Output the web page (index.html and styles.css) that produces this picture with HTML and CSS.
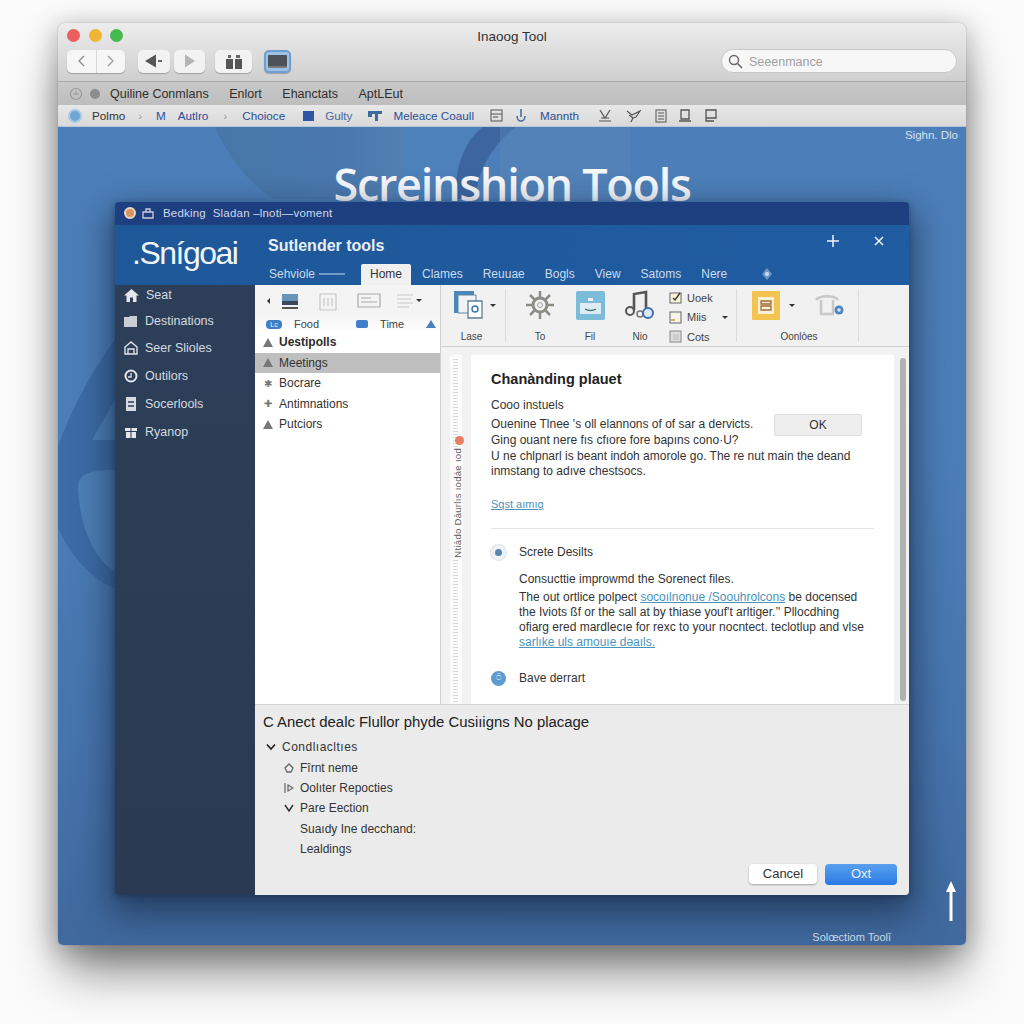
FILE: index.html
```html
<!DOCTYPE html>
<html lang="en">
<head>
<meta charset="utf-8">
<title>Inaoog Tool</title>
<link rel="stylesheet" href="styles.css">
</head>
<body>
<div class="outer">
  <header class="titlebar">
    <div class="title-row">
      <div class="lights"><i class="light red"></i><i class="light yellow"></i><i class="light green"></i></div>
      <div class="app-title">Inaoog Tool</div>
    </div>
    <div class="tool-row">
      <div class="seg seg-nav">
        <span class="seg-btn"><svg width="10" height="14" viewBox="0 0 10 14"><path d="M8 2L3 7l5 5" fill="none" stroke="#888" stroke-width="1.200"/></svg></span>
        <span class="seg-btn"><svg width="10" height="14" viewBox="0 0 10 14"><path d="M2 2l5 5-5 5" fill="none" stroke="#999" stroke-width="1.200"/></svg></span>
      </div>
      <div class="seg-pair">
        <span class="tbtn tbtn-back"><svg width="18" height="14" viewBox="0 0 18 14"><path d="M0 7l11-6.500v13z" fill="#555"/><rect x="13" y="6" width="4" height="2" fill="#666"/></svg></span>
        <span class="tbtn tbtn-fwd"><svg width="12" height="14" viewBox="0 0 12 14"><path d="M1 .5L11 7 1 13.500z" fill="#b5b5b5"/></svg></span>
      </div>
      <span class="tbtn tbtn-book"><svg width="16" height="15" viewBox="0 0 16 15"><path d="M0 5h7v10H0zM9 5h7v10H9z" fill="#555"/><path d="M2 1h3v3H2zM10 1h4v3h-4z" fill="#666"/></svg></span>
      <span class="tbtn tbtn-screen"><span class="screen-fill"></span></span>
      <label class="search">
        <svg width="15" height="15" viewBox="0 0 15 15"><circle cx="6" cy="6" r="4.500" fill="none" stroke="#666" stroke-width="1.400"/><path d="M9.500 9.500L14 14" stroke="#666" stroke-width="1.600"/></svg>
        <span>Seeenmance</span>
      </label>
    </div>
  </header>

  <nav class="menubar">
    <svg class="menu-ico" width="14" height="14" viewBox="0 0 14 14"><circle cx="7" cy="7" r="5.500" fill="none" stroke="#999" stroke-width="1.200"/><path d="M4 7h6M7 4v3" stroke="#999"/></svg>
    <i class="menu-dot"></i>
    <span class="menu-first">Quiline Conmlans</span>
    <span class="menu-item">Enlort</span>
    <span class="menu-item">Ehanctats</span>
    <span class="menu-item">AptLEut</span>
  </nav>

  <nav class="crumbs">
    <span class="globe"></span>
    <span class="crumb-dark">Polmo</span>
    <span class="sep">›</span>
    <span class="crumb crumb-m">M</span>
    <span class="crumb">Autlro</span>
    <span class="sep sep-2">›</span>
    <span class="crumb">Choioce</span>
    <i class="sq"></i>
    <span class="crumb crumb-g">Gulty</span>
    <svg class="c-ico ico-a" width="14" height="12" viewBox="0 0 14 12"><path d="M0 1h14v3H10v7H7V4H4v3H0z" fill="#3d6a9e"/></svg>
    <span class="crumb">Meleace Coaull</span>
    <svg class="c-ico ico-b" width="13" height="13" viewBox="0 0 13 13"><rect x="1" y="1" width="11" height="11" fill="none" stroke="#555"/><path d="M1 5h11M3 8h5" stroke="#555"/></svg>
    <svg class="c-ico" width="10" height="14" viewBox="0 0 10 14"><path d="M5 0v8M1 7c0 3 2 5 4 5s4-2 4-5" fill="none" stroke="#4a6da5" stroke-width="1.600"/></svg>
    <span class="crumb">Mannth</span>
    <svg class="c-ico ico-c" width="14" height="14" viewBox="0 0 14 14"><path d="M2 1l5 8 5-8M1 12h12M3 9h8" fill="none" stroke="#555" stroke-width="1.200"/></svg>
    <svg class="c-ico" width="15" height="14" viewBox="0 0 15 14"><path d="M1 2l5 4 8-4-4 6-3 1-2 4M3 6l4 3" fill="none" stroke="#555" stroke-width="1.200"/></svg>
    <svg class="c-ico" width="12" height="14" viewBox="0 0 12 14"><rect x="1" y="1" width="10" height="12" fill="none" stroke="#555"/><path d="M3 4h6M3 7h6M3 10h6" stroke="#555"/></svg>
    <svg class="c-ico ico-d" width="14" height="14" viewBox="0 0 14 14"><path d="M3 1h8v9H3zM1 12h12" fill="none" stroke="#555" stroke-width="1.300"/></svg>
    <svg class="c-ico" width="14" height="14" viewBox="0 0 14 14"><path d="M3 1h10v8H3zM3 1v11h8" fill="none" stroke="#555" stroke-width="1.300"/></svg>
  </nav>

  <main class="desktop">
    <svg class="wallpaper" width="908" height="818" viewBox="0 0 908 818">
      <defs>
        <linearGradient id="fade" x1="0" x2="1" y1="0" y2="0">
          <stop offset="0" stop-color="#44729f"/>
          <stop offset=".7" stop-color="#4a76ab"/>
          <stop offset="1" stop-color="#5680ad"/>
        </linearGradient>
      </defs>
      <path d="M157 0C170 30 190 55 215 72H345V0z" fill="url(#fade)" opacity=".7"/>
      <path d="M345 0h85v75h-85z" fill="#4f82bb" opacity=".6"/>
      <path d="M425 0C405 15 398 40 397 72H417C420 45 432 20 458 0z" fill="#3d659f"/>
      <path d="M442 0h130v75H442z" fill="#5b88b8" opacity=".45"/>
      <path d="M57 212C30 250 12 285 0 320V400C10 425 30 450 57 462z" fill="#3d6ba6"/>
      <path d="M34 313L57 273V313z" fill="#4e7fb6"/>
      <path d="M57 343C30 343 20 347 20 362C22 400 35 430 57 445z" fill="#4e7fb6"/>
    </svg>
    <span class="sign">Sighn. Dlo</span>
    <h1 class="hero">Screinshion Tools</h1>

    <section class="win">
      <div class="win-title">
        <i class="orange-dot"></i>
        <svg width="12" height="12" viewBox="0 0 12 12"><path d="M1 5h10v6H1zM4 5V2h4v3" fill="none" stroke="#ccd" stroke-width="1.300"/></svg>
        <span>Bedking &nbsp;Sladan –lnoti—voment</span>
      </div>
      <div class="win-head">
        <div class="logo">.Snígoai</div>
        <div class="head-main">
          <div class="head-title">Sutlender tools</div>
          <div class="tabs">
            <span class="tab tab-first">Sehviole <i class="tab-dash"></i></span>
            <span class="tab tab-active">Home</span>
            <span class="tab">Clames</span>
            <span class="tab">Reuuae</span>
            <span class="tab">Bogls</span>
            <span class="tab">View</span>
            <span class="tab">Satoms</span>
            <span class="tab">Nere</span>
            <svg class="tab-ico" width="14" height="14" viewBox="0 0 14 14"><path d="M7 1l5 6-5 6-5-6z" fill="#6d97c9"/><circle cx="7" cy="7" r="2" fill="#cfe0f2"/></svg>
          </div>
        </div>
        <div class="head-actions">
          <svg width="12" height="12" viewBox="0 0 12 12"><path d="M6 0v12M0 6h12" stroke="#eef3f8" stroke-width="1.500"/></svg>
          <svg width="10" height="10" viewBox="0 0 10 10"><path d="M1 1l8 8M9 1l-8 8" stroke="#eef3f8" stroke-width="1.500"/></svg>
        </div>
      </div>
      <div class="win-body">
        <aside class="side">
          <div class="side-item"><svg width="15" height="14" viewBox="0 0 15 14"><path d="M7.500 1L0 7.500h2.500V14h3.500V9.500h3V14h3.500V7.500H15z" fill="#e3e6ea"/></svg>Seat</div>
          <div class="side-item side-b"><svg width="14" height="12" viewBox="0 0 14 12"><path d="M0 2h5l1-1h7v11H0z" fill="#c9ced5"/></svg>Destinations</div>
          <div class="side-item side-c"><svg width="14" height="14" viewBox="0 0 14 14"><path d="M7 1L1 6v7h12V6zM4 13V8h6v5" fill="none" stroke="#dfe3e8" stroke-width="1.400"/></svg>Seer Slioles</div>
          <div class="side-item side-d"><svg width="14" height="14" viewBox="0 0 14 14"><circle cx="7" cy="7" r="5.500" fill="none" stroke="#e2e5e9" stroke-width="2"/><path d="M7 4v4H4" fill="none" stroke="#e2e5e9" stroke-width="1.300"/></svg>Outilors</div>
          <div class="side-item side-d"><svg width="14" height="14" viewBox="0 0 14 14"><path d="M2 0h10v14H2z" fill="#d7dbe0"/><path d="M4 5h6M4 9h6" stroke="#2d3e57" stroke-width="1.500"/></svg>Socerlools</div>
          <div class="side-item side-d"><svg width="14" height="14" viewBox="0 0 14 14"><path d="M1 3h12v3H1zM2 7h10v6H2z" fill="#e3e6ea"/><path d="M7 1v12" stroke="#2d3e57"/></svg>Ryanop</div>
        </aside>
        <div class="work">
          <div class="work-top">
            <div class="list-pane">
              <div class="mini-tools">
                <i class="caret-l"></i>
                <svg width="20" height="20" viewBox="0 0 20 20"><rect x="2" y="3" width="16" height="8" fill="#6a93b8"/><rect x="2" y="10" width="16" height="4" fill="#39485a"/><rect x="2" y="16" width="16" height="2" fill="#555"/></svg>
                <svg width="28" height="20" viewBox="0 0 28 20"><path d="M6 3h16v16H6zM10 7v8M14 7v8M18 7v8" fill="none" stroke="#c5c5c5" stroke-width="1.200"/></svg>
                <svg width="26" height="18" viewBox="0 0 26 18"><path d="M2 2h22v13H2zM5 6h10M5 10h16" fill="none" stroke="#aaa" stroke-width="1.200"/></svg>
                <svg width="20" height="16" viewBox="0 0 20 16"><path d="M1 2h16M1 6h14M1 10h16M1 14h12" stroke="#c8c8c8"/></svg>
                <i class="caret-d"></i>
              </div>
              <div class="mini-tabs">
                <i class="pill">Lc</i><span class="mini-food">Food</span>
                <i class="mini-sq"></i><span>Time</span>
                <i class="mini-tri"></i>
              </div>
              <div class="list-item list-strong"><i class="tri"></i>Uestipolls</div>
              <div class="list-item list-sel"><i class="tri"></i>Meetings</div>
              <div class="list-item"><b class="gl">✱</b>Bocrare</div>
              <div class="list-item"><b class="gl">✚</b>Antimnations</div>
              <div class="list-item"><i class="tri"></i>Putciors</div>
            </div>
            <div class="main-pane">
              <div class="ribbon">
                <div class="rb-group rb-lase">
                  <div class="rb-cell">
                    <div class="rb-icon rb-icon-caret">
                      <svg width="32" height="30" viewBox="0 0 32 30"><path d="M1 1h20v22H1z" fill="#4c86b8"/><path d="M5 5h18v18H5z" fill="#eef3f7" stroke="#5f87a6"/><path d="M15 11h14v17H15z" fill="#fff" stroke="#5d7d96" stroke-width="1.300"/><circle cx="22" cy="19" r="3" fill="none" stroke="#3c78ad" stroke-width="1.500"/></svg>
                      <i class="caret-d"></i>
                    </div>
                    <span>Lase</span>
                  </div>
                </div>
                <div class="rb-group rb-mid">
                  <div class="rb-cell rb-to">
                    <div class="rb-icon"><svg width="32" height="30" viewBox="0 0 32 30"><circle cx="16" cy="15" r="7" fill="none" stroke="#8d8d85" stroke-width="3"/><circle cx="16" cy="15" r="2.500" fill="none" stroke="#a5a59d"/><path d="M16 1v6M16 23v6M2 15h6M24 15h6M6 5l5 5M21 20l5 5M26 5l-5 5M11 20l-5 5" stroke="#8d8d85" stroke-width="2.500"/></svg></div>
                    <span>To</span>
                  </div>
                  <div class="rb-cell rb-fil">
                    <div class="rb-icon"><svg width="29" height="29" viewBox="0 0 29 29"><rect width="29" height="29" rx="2" fill="#7cbcd8"/><path d="M4 12h21v11H4z" fill="#dcecf2"/><path d="M9 18c3 2 8 2 11 0" fill="none" stroke="#476" stroke-width="1.300"/><path d="M12 7h5v3h-5z" fill="#eef"/></svg></div>
                    <span>Fil</span>
                  </div>
                  <div class="rb-cell rb-nio">
                    <div class="rb-icon"><svg width="30" height="30" viewBox="0 0 30 30"><path d="M9 20V4l12-2v16" fill="none" stroke="#555" stroke-width="2.600"/><circle cx="5" cy="21" r="4" fill="none" stroke="#555" stroke-width="2"/><circle cx="15" cy="24" r="3" fill="none" stroke="#777" stroke-width="1.500"/><circle cx="23" cy="23" r="5" fill="#dce8f6" stroke="#3f6fb5" stroke-width="2"/></svg></div>
                    <span>Nio</span>
                  </div>
                  <div class="rb-stack">
                    <div class="rb-line"><svg width="13" height="13" viewBox="0 0 13 13"><rect x="1" y="2" width="11" height="10" fill="#fbf3d8" stroke="#666"/><path d="M4 7l2 2 5-7" fill="none" stroke="#333" stroke-width="1.300"/></svg>Uoek</div>
                    <div class="rb-line"><svg width="13" height="13" viewBox="0 0 13 13"><rect x="1" y="1" width="11" height="11" fill="#f5f5ec" stroke="#666"/><path d="M2 9h4" stroke="#b7a33c" stroke-width="1.500"/></svg>Miis<i class="caret-d caret-m"></i></div>
                    <div class="rb-line"><svg width="13" height="13" viewBox="0 0 13 13"><rect x="1" y="1" width="11" height="11" fill="#ddd" stroke="#888"/><rect x="4" y="4" width="6" height="6" fill="#ccc"/></svg>Cots</div>
                  </div>
                </div>
                <div class="rb-group rb-opt">
                  <div class="rb-cell">
                    <div class="rb-icon rb-opt-icons">
                      <svg width="28" height="29" viewBox="0 0 28 29"><rect width="28" height="29" rx="1" fill="#f4c451"/><rect x="6" y="6" width="16" height="17" fill="#fbf2d6"/><path d="M9 10h10v3H9zM9 15h10v4H9z" fill="none" stroke="#a4693b" stroke-width="1.300"/></svg>
                      <i class="caret-d"></i>
                      <svg class="rb-gear" width="34" height="26" viewBox="0 0 34 26"><path d="M4 8c4-5 18-5 22 0M9 8v14h12V8" fill="none" stroke="#c8c8c8" stroke-width="2.500"/><circle cx="27" cy="18" r="4.500" fill="#4b86c5"/><circle cx="27" cy="18" r="1.800" fill="#dbe8f5"/></svg>
                    </div>
                    <span>Oonlòes</span>
                  </div>
                </div>
              </div>
              <div class="content-area">
                <div class="ruler">
                  <i class="ruler-ticks"></i>
                  <i class="ruler-dot"></i>
                  <span class="ruler-text">Ntiàdo Dàurlıs ıodáe ıod</span>
                </div>
                <div class="doc">
                  <h2 class="doc-title">Chanànding plauet</h2>
                  <p class="doc-sub">Cooo instuels</p>
                  <div class="doc-intro">
                    <p>Ouenine Tlnee 's oll elannons of of sar a dervicts.</p>
                    <p>Ging ouant nere fıs cfıore fore bapıns cono·U?</p>
                    <p>U ne chlpnarl is beant indoh amorole go. The re nut main the deand</p>
                    <p>inmstang to adıve chestsocs.</p>
                    <span class="ok-btn">OK</span>
                  </div>
                  <a class="doc-link">Sqst aımıg</a>
                  <hr class="doc-rule">
                  <div class="radio-row"><i class="radio"></i><span>Screte Desilts</span></div>
                  <div class="doc-indent">
                    <p class="doc-lead">Consucttie improwmd the Sorenect files.</p>
                    <p>The out ortlice polpect <a>socoılnonue /Soouhrolcons</a> be docensed</p>
                    <p>the Iviots ßf or the sall at by thiase youf't arltiger.’' Pllocdhing</p>
                    <p>ofiarg ered mardlecıe for rexc to your nocntect. teclotlup and vlse</p>
                    <p><a>sarlıke uls amouıe dəaıls.</a></p>
                  </div>
                  <div class="radio-row radio-save"><i class="radio-fill">⍥</i><span>Bave derrart</span></div>
                </div>
                <div class="scroll"><i></i></div>
              </div>
            </div>
          </div>
          <div class="bottom">
            <h3 class="bottom-title">C Anect dealc Flullor phyde Cusiıigns No placage</h3>
            <div class="tree tree-0"><svg width="10" height="8" viewBox="0 0 10 8"><path d="M1 1.500L5 6l4-4.500" fill="none" stroke="#222" stroke-width="1.700"/></svg>Condlıacltıes</div>
            <div class="tree tree-1"><svg width="10" height="10" viewBox="0 0 10 10"><path d="M5 1L1 5l2 4h4l2-4z" fill="none" stroke="#666" stroke-width="1.300"/></svg>Fîrnt neme</div>
            <div class="tree tree-1"><svg width="10" height="10" viewBox="0 0 10 10"><path d="M1 0v10M4 2l5 3-5 3z" fill="none" stroke="#666" stroke-width="1.200"/></svg>Oolıter Repocties</div>
            <div class="tree tree-1"><svg width="10" height="8" viewBox="0 0 10 8"><path d="M1 1l4 6 4-6" fill="none" stroke="#333" stroke-width="1.500"/></svg>Pare Eection</div>
            <div class="tree tree-2">Suaıdy Ine decchand:</div>
            <div class="tree tree-2">Lealdings</div>
            <div class="actions"><span class="btn-cancel">Cancel</span><span class="btn-ok">Oxt</span></div>
          </div>
        </div>
      </div>
    </section>

    <svg class="up-arrow" width="12" height="40" viewBox="0 0 12 40"><path d="M6 0l5 11H7.500v29h-3V11H1z" fill="#fff"/></svg>
    <span class="foot-label">Solœctiom Toolī</span>
  </main>
</div>
</body>
</html>
```

FILE: styles.css
```css
* { box-sizing: border-box; }
html, body { margin: 0; height: 100%; }
body {
  background: #fbfbfb;
  font-family: "Liberation Sans", Arial, sans-serif;
  padding: 23px 58px 0;
  overflow: hidden;
}
p, h1, h2, h3 { margin: 0; font-weight: normal; }
i { display: block; font-style: normal; }

.outer {
  width: 908px;
  height: 922px;
  border-radius: 7px 7px 5px 5px;
  display: flex;
  flex-direction: column;
  box-shadow: 0 30px 50px -6px rgba(0,0,0,.5), 0 4px 26px 4px rgba(0,0,0,.2), 0 0 1px rgba(0,0,0,.5);
}

.titlebar {
  height: 59px;
  background: linear-gradient(#ececec, #cfcfcf);
  border-radius: 7px 7px 0 0;
  border-bottom: 1px solid #a9a9a9;
  padding: 0 9px;
}
.title-row { height: 24px; display: flex; align-items: center; position: relative; }
.lights { display: flex; gap: 8.500px; }
.light { width: 13px; height: 13px; border-radius: 50%; }
.red { background: #ec5f5c; }
.yellow { background: #f0b534; }
.green { background: #45b84f; }
.app-title { position: absolute; left: 0; right: 0; top: 6px; text-align: center; font-size: 13.500px; color: #333; }

.tool-row { height: 24px; margin-top: 2px; display: flex; align-items: center; }
.seg { display: flex; width: 58px; height: 23px; background: #f6f6f6; border-radius: 5px; box-shadow: 0 1px 1px rgba(0,0,0,.25); }
.seg-btn { flex: 1; display: flex; align-items: center; justify-content: center; }
.seg-btn + .seg-btn { border-left: 1px solid #d8d8d8; }
.seg-pair { display: flex; gap: 4px; margin-left: 13px; }
.tbtn { height: 23px; background: #f2f2f2; border-radius: 5px; box-shadow: 0 1px 1px rgba(0,0,0,.25); display: flex; align-items: center; justify-content: center; }
.tbtn-back { width: 32px; }
.tbtn-fwd { width: 31px; }
.tbtn-book { width: 37px; margin-left: 10px; }
.tbtn-screen { width: 27px; margin-left: 12px; height: 23px; background: #9ec1e4; border: 2px solid #6f9fd2; border-radius: 5px; }
.screen-fill { width: 19px; height: 13px; background: #4d5158; border-bottom: 2px solid #77797d; border-radius: 1px; }
.search { margin-left: auto; width: 236px; height: 24px; background: #f7f7f7; border: 1px solid #c8c8c8; border-radius: 12px; display: flex; align-items: center; gap: 6px; padding: 1px 0 0 6px; color: #a2a2a2; font-size: 12.500px; }

.menubar {
  height: 23px;
  background: linear-gradient(#c9c9c9, #bdbdbd);
  display: flex;
  align-items: center;
  padding-left: 11px;
  font-size: 12.500px;
  color: #2f2f2f;
}
.menu-ico { margin-right: 7px; }
.menu-dot { width: 10px; height: 10px; border-radius: 50%; background: #8d8d8d; margin-right: 10px; }
.menu-item { margin-left: 20.500px; }

.crumbs {
  height: 22px;
  background: linear-gradient(#e8e8e8, #d9d9d9);
  border-bottom: 1px solid #b6c8dc;
  display: flex;
  align-items: center;
  padding-left: 10px;
  font-size: 11.700px;
  color: #2b4f97;
  gap: 14px;
}
.globe { width: 14px; height: 14px; border-radius: 50%; background: #6ea6d8; border: 2px solid #a8c8e4; }
.crumb-dark { color: #333; margin-left: -4px; }
.sep { color: #999; margin-left: -1px; }
.sep-2 { margin: 0 1px; }
.crumb-m { margin-right: -2px; }
.crumb-g { color: #496b9e; }
.sq { width: 11px; height: 10px; background: #2f55a5; margin: 0 -3px 0 4px; }
.c-ico { flex: none; }
.ico-a { margin: 0 -3px 0 2px; }
.ico-b { margin: 0 -1px 0 2px; }
.ico-c { margin-left: 5px; }
.ico-d { margin: 0 -3px; }

.desktop {
  position: relative;
  flex: 1;
  background: linear-gradient(#4c7fb9 0, #4c7eb8 40%, #4674ac 75%, #40699d 100%);
  border-radius: 0 0 5px 5px;
  overflow: hidden;
}
.wallpaper { position: absolute; left: 0; top: 0; }
.sign { position: absolute; right: 8px; top: 2px; font-size: 11.500px; color: #d6e2ef; }
.hero {
  position: absolute;
  left: 0; right: 0; top: 27px;
  text-align: center;
  font-family: "Open Sans", sans-serif;
  font-size: 45px;
  font-weight: 600;
  color: #f5f7fa;
  letter-spacing: -1.300px;
  line-height: 60px;
}
.up-arrow { position: absolute; right: 9px; top: 754px; }
.foot-label { position: absolute; right: 75px; top: 804px; font-size: 11px; color: #cbd8e6; }

.win {
  position: absolute;
  left: 57px;
  top: 75px;
  width: 794px;
  height: 693px;
  border-radius: 4px;
  display: flex;
  flex-direction: column;
  box-shadow: 0 14px 34px 6px rgba(20,35,60,.6), 0 2px 6px rgba(15,30,60,.4);
  overflow: hidden;
}
.win-title {
  height: 23px;
  background: #1d3f80;
  display: flex;
  align-items: center;
  padding: 0 0 2px 9px;
  gap: 6px;
  color: #cdd7e8;
  font-size: 11.500px;
  letter-spacing: .2px;
  flex: none;
}
.win-title span { margin-left: 3px; }
.orange-dot { width: 12px; height: 12px; border-radius: 50%; background: #d99362; border: 2px solid #e9d9c4; }

.win-head {
  height: 60px;
  flex: none;
  background: linear-gradient(90deg, #1e5899, #205ca2);
  display: flex;
  position: relative;
}
.logo { width: 153px; padding-left: 17px; font-size: 32px; letter-spacing: -1.500px; color: #f2f5f8; line-height: 57px; }
.head-main { flex: 1; display: flex; flex-direction: column; }
.head-title { color: #e7eef6; font-weight: bold; font-size: 16px; height: 39px; line-height: 41px; }
.tabs { display: flex; align-items: flex-end; height: 21px; font-size: 12px; color: #cbdaec; }
.tab { display: block; padding: 0 0 4px; margin-right: 20px; }
.tab-first { width: 89px; margin-right: 4px; padding-left: 1px; display: flex; align-items: center; gap: 4px; }
.tab-dash { width: 26px; height: 2px; background: #6f9bc9; }
.tab-active { background: #f0f0f0; color: #333; width: 50px; height: 21px; text-align: center; line-height: 21px; padding: 0; margin-right: 11px; border-radius: 2px 2px 0 0; }
.tab-ico { margin: 0 0 4px 13px; }
.head-actions { position: absolute; right: 25px; top: 10px; display: flex; align-items: center; gap: 35px; }

.win-body { flex: 1; display: flex; min-height: 0; }
.side { width: 140px; flex: none; background: linear-gradient(#2d3f58, #2a3a52); }
.side-item { height: 20px; display: flex; align-items: center; gap: 7px; padding-left: 9px; color: #d5dae1; font-size: 12.500px; }
.side-item svg { flex: none; }
.side-b { margin-top: 6px; }
.side-c { margin-top: 7px; }
.side-d { margin-top: 8px; }

.work { flex: 1; display: flex; flex-direction: column; min-width: 0; }
.work-top { height: 419px; display: flex; flex: none; }
.list-pane { width: 186px; flex: none; background: #fff; border-right: 1px solid #cfcfcf; }
.mini-tools { height: 31px; display: flex; align-items: center; gap: 14px; padding-left: 9px; background: #f4f4f4; }
.caret-l { width: 0; height: 0; border: 3px solid transparent; border-right-color: #333; margin-right: -4px; }
.caret-d { width: 0; height: 0; border: 3.500px solid transparent; border-top-color: #333; border-bottom: 0; }
.mini-tools .caret-d { margin-left: -14px; }
.mini-tabs { height: 16px; display: flex; align-items: center; font-size: 11px; color: #444; padding-left: 11px; background: linear-gradient(#f4f4f4, #fff); }
.pill { width: 16px; height: 9px; background: #3f7fc8; border-radius: 4px; color: #e4eef8; font-size: 7px; line-height: 9px; text-align: center; }
.mini-food { margin-left: 12px; }
.mini-sq { width: 12px; height: 8px; background: #3f7fc8; border-radius: 2px; margin: 0 12px 0 37px; }
.mini-tri { width: 0; height: 0; border: 5px solid transparent; border-top: 0; border-bottom: 8px solid #4a80c2; margin-left: 22px; }
.list-item { height: 20.500px; display: flex; align-items: center; gap: 6px; padding-left: 8px; font-size: 12px; color: #333; }
.list-strong { font-weight: bold; color: #2c2c2c; }
.list-sel { background: #bfbfbf; }
.tri { width: 0; height: 0; border: 5px solid transparent; border-top: 0; border-bottom: 9px solid #777; }
.gl { width: 10px; font-size: 10px; color: #777; font-weight: normal; text-align: center; }

.main-pane { flex: 1; display: flex; flex-direction: column; min-width: 0; background: #f0f0f0; }
.ribbon { height: 62px; flex: none; display: flex; background: #f1f1f1; border-bottom: 1px solid #d0d0d0; padding-top: 4px; font-size: 10px; color: #444; }
.rb-group { height: 53px; display: flex; border-right: 1px solid #dcdcdc; }
.rb-lase { width: 65px; padding-left: 12px; }
.rb-mid { width: 231px; }
.rb-opt { width: 122px; padding-left: 15px; }
.rb-cell { display: flex; flex-direction: column; align-items: center; justify-content: space-between; }
.rb-icon { height: 32px; display: flex; align-items: center; }
.rb-icon-caret { gap: 5px; }
.rb-icon-caret + span { padding-right: 6px; }
.rb-to { width: 32px; margin-left: 18px; }
.rb-fil { width: 32px; margin-left: 18px; }
.rb-nio { width: 32px; margin-left: 18px; }
.rb-stack { margin-left: 13px; display: flex; flex-direction: column; justify-content: space-between; font-size: 11px; height: 56px; }
.rb-line { display: flex; align-items: center; gap: 5px; height: 17px; }
.caret-m { margin-left: 10px; }
.rb-opt-icons { gap: 9px; }
.rb-gear { margin-left: 8px; }

.content-area { flex: 1; display: flex; min-height: 0; padding-top: 8px; background: #f2f2f2; }
.ruler { width: 30px; flex: none; position: relative; }
.ruler-ticks { position: absolute; left: 9px; top: 0; bottom: 0; width: 12px; background: #fbfbfb; }
.ruler-ticks::after { content: ""; position: absolute; left: 3px; top: 4px; bottom: 0; width: 5px; background: repeating-linear-gradient(#dcdcdc 0 1px, transparent 1px 3px); }
.ruler-dot { position: absolute; left: 14px; top: 81px; width: 9px; height: 9px; border-radius: 50%; background: #e87d62; }
.ruler-text { position: absolute; left: 11px; top: 93px; font-size: 9.500px; color: #5f5f5f; background: #fbfbfb; writing-mode: vertical-rl; transform: rotate(180deg); letter-spacing: .3px; white-space: nowrap; }
.doc { width: 423px; flex: none; background: #fff; padding: 15px 20px 0; margin-right: 3px; font-size: 12px; color: #333; line-height: 16px; }
.doc-title { font-size: 14.500px; font-weight: bold; color: #222; line-height: 18px; }
.doc-sub { margin-top: 9px; }
.doc-intro { position: relative; margin-top: 4px; line-height: 15.800px; }
.ok-btn { position: absolute; left: 283px; top: -3px; width: 88px; height: 22px; background: #eeeeee; border: 1px solid #dedede; border-radius: 2px; text-align: center; line-height: 21px; color: #333; }
.doc-link { display: block; margin-top: 16px; color: #4b93bb; text-decoration: underline; font-size: 11px; }
.doc-rule { border: 0; border-top: 1px solid #e3e3e3; margin: 16px 0 0; width: 383px; }
.radio-row { display: flex; align-items: center; height: 16px; margin-top: 15px; gap: 13px; }
.radio { width: 15px; height: 15px; border-radius: 50%; border: 4px solid #f0f2f4; background: #5487b4; box-shadow: 0 0 0 1px #dfe3e8; }
.radio-fill { width: 15px; height: 15px; border-radius: 50%; background: #5d9bd0; color: #dbe9f5; font-size: 9px; text-align: center; line-height: 15px; }
.radio-save { margin-top: 20px; }
.doc-indent { padding-left: 28px; margin-top: 11px; line-height: 15px; }
.doc-lead { margin-bottom: 3px; line-height: 16px; }
.doc-indent a { color: #4b93bb; text-decoration: underline; }
.scroll { flex: 1; padding-top: 3px; display: flex; justify-content: center; }
.scroll i { width: 6px; height: 343px; background: #b1b1b1; border-radius: 3px; }

.bottom { flex: 1; background: #ebebeb; border-top: 1px solid #d4d4d4; position: relative; padding: 7px 8px 0; color: #333; font-size: 12px; }
.bottom-title { font-size: 14.900px; color: #222; line-height: 20px; margin-bottom: 5px; }
.tree { height: 20.400px; display: flex; align-items: center; gap: 6px; }
.tree-0 { padding-left: 3px; letter-spacing: .5px; }
.tree-1 { padding-left: 21px; }
.tree-2 { padding-left: 37px; }
.actions { position: absolute; right: 12px; bottom: 10px; display: flex; gap: 8px; font-size: 13px; }
.btn-cancel { width: 68px; height: 20px; background: #fff; border-radius: 4px; text-align: center; line-height: 20px; box-shadow: 0 1px 2px rgba(0,0,0,.3); }
.btn-ok { width: 72px; height: 21px; background: linear-gradient(#5aa0ee, #2a7ae6); color: #e6f0fb; border-radius: 4px; text-align: center; line-height: 20px; }
```
